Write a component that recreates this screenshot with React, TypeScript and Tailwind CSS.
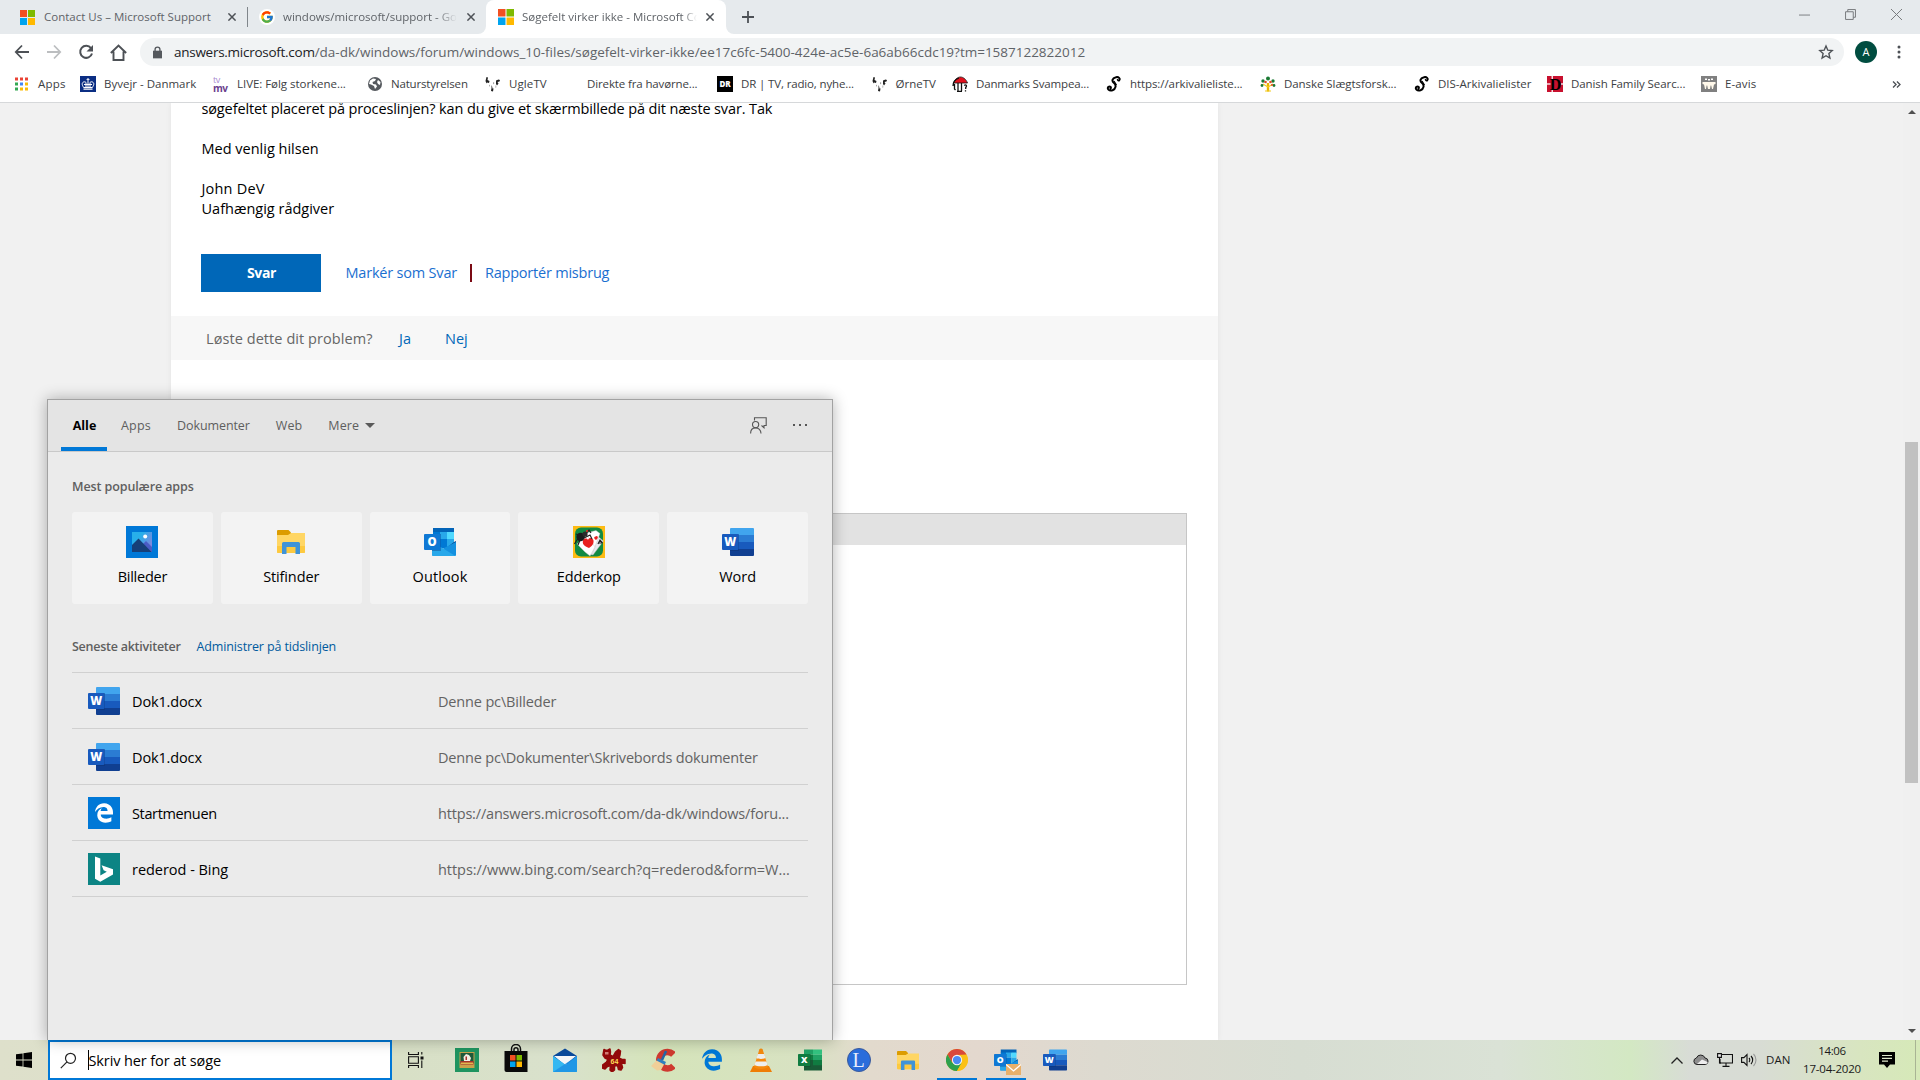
import React from 'react';
import { FcGoogle } from 'react-icons/fc';
import { FaEdgeLegacy } from 'react-icons/fa6';

interface IconProps {
  className?: string;
}

/* ---------- Shared icons ---------- */

const MicrosoftLogo: React.FC<IconProps> = ({ className }) => (
  <svg viewBox="0 0 16 16" className={className}>
    <path fill="#f25022" d="M0 0h7.5v7.5H0z" />
    <path fill="#7fba00" d="M8.5 0H16v7.5H8.5z" />
    <path fill="#00a4ef" d="M0 8.5h7.5V16H0z" />
    <path fill="#ffb900" d="M8.5 8.5H16V16H8.5z" />
  </svg>
);

const WordIcon: React.FC<IconProps> = ({ className }) => (
  <svg viewBox="0 0 32 28" className={className}>
    <path fill="#41a5ee" d="M9 0h22a1 1 0 0 1 1 1v6H8V1a1 1 0 0 1 1-1z" />
    <path fill="#2b7cd3" d="M8 7h24v7H8z" />
    <path fill="#185abd" d="M8 14h24v7H8z" />
    <path fill="#103f91" d="M8 21h24v6a1 1 0 0 1-1 1H9a1 1 0 0 1-1-1z" />
    <path fill="#0c2f6b" opacity=".4" d="M8 6h9v17H8z" />
    <rect y="6" width="16.4" height="16" rx="1" fill="#185abd" />
    <text x="8.2" y="18.2" textAnchor="middle" fontFamily="Open Sans, sans-serif" fontWeight="800" fontSize="11.5" fill="#fff">W</text>
  </svg>
);

const ExcelIcon: React.FC<IconProps> = ({ className }) => (
  <svg viewBox="0 0 32 28" className={className}>
    <path fill="#21a366" d="M8 0h12v7H8z" />
    <path fill="#33c481" d="M20 0h12v7H20z" />
    <path fill="#107c41" d="M8 7h12v7H8z" />
    <path fill="#21a366" d="M20 7h12v7H20z" />
    <path fill="#185c37" d="M8 14h24v14H8z" />
    <path fill="#107c41" d="M20 14h12v7H20z" />
    <path fill="#0b3d23" opacity=".35" d="M8 6h9v17H8z" />
    <rect y="6" width="16.4" height="16" rx="1" fill="#107c41" />
    <text x="8.2" y="18.2" textAnchor="middle" fontFamily="Open Sans, sans-serif" fontWeight="800" fontSize="12" fill="#fff">X</text>
  </svg>
);

const OutlookIcon: React.FC<IconProps> = ({ className }) => (
  <svg viewBox="0 0 32 28" className={className}>
    <path fill="#0364b8" d="M9 0h21v5H9z" />
    <path fill="#0078d4" d="M9 4h7v7H9z" />
    <path fill="#28a8ea" d="M16 4h7v7h-7z" />
    <path fill="#50d9ff" d="M23 4h7v7h-7z" />
    <path fill="#0364b8" d="M9 11h7v8H9z" />
    <path fill="#0078d4" d="M16 11h7v9h-7z" />
    <path fill="#28a8ea" d="M23 11h7v8h-7z" />
    <path fill="#0a4a92" d="M30 14l2-1v4l-12 6-12-6h3l9 4.5z" />
    <path fill="#1490df" d="M32 14v13a1 1 0 0 1-1 1H8l12-8z" />
    <path fill="#28a8ea" d="M8 14v13a1 1 0 0 0 1 1h22.5L20 21z" />
    <path fill="#0a2767" opacity=".35" d="M8 6h9v17H8z" />
    <rect y="6" width="16.4" height="16" rx="1" fill="#0f78d4" />
    <text x="8.2" y="18.2" textAnchor="middle" fontFamily="Open Sans, sans-serif" fontWeight="800" fontSize="11.5" fill="#fff">O</text>
  </svg>
);

const FolderIcon: React.FC<IconProps> = ({ className }) => (
  <svg viewBox="0 0 28 24" className={className}>
    <path fill="#dc9c00" d="M0 1a1 1 0 0 1 1-1h10.5L14 2.500V6H0z" />
    <path fill="#ffd664" d="M0 5h11l3-2h14v19a1 1 0 0 1-1 1H1a1 1 0 0 1-1-1z" />
    <path fill="#fdc93f" d="M0 16h28v6a1 1 0 0 1-1 1H1a1 1 0 0 1-1-1z" />
    <path fill="#3f93d8" d="M5 24V13.500a1.500 1.500 0 0 1 1.500-1.500h15a1.500 1.500 0 0 1 1.500 1.500V24h-4.500v-7h-9v7z" />
  </svg>
);

const PhotosIcon: React.FC<IconProps> = ({ className }) => (
  <svg viewBox="0 0 32 32" className={className}>
    <defs>
      <linearGradient id="photosSky" x1="0" x2="1" y1="0" y2=".6">
        <stop offset=".4" stopColor="#28afea" />
        <stop offset="1" stopColor="#7f86dd" />
      </linearGradient>
    </defs>
    <path fill="#0078d7" d="M0 0h32v32H0z" />
    <path fill="url(#photosSky)" d="M6 6h20v20H6z" />
    <path fill="#4a5cc4" d="M17 18l3-3 6 6v5h-4z" />
    <path fill="#163f78" d="M6 19l6.500-6.500L25.500 26H6z" />
    <circle cx="19.200" cy="10.500" r="2" fill="#fff" />
  </svg>
);

const SpiderIcon: React.FC<IconProps> = ({ className }) => (
  <svg viewBox="0 0 32 32" className={className}>
    <path fill="#fdbb13" d="M0 0h32v32H0z" />
    <rect x="2" y="1.500" width="28" height="29" rx="6" fill="#118a43" />
    <path fill="#e9e9ee" stroke="#aaa" strokeWidth=".4" d="M22 8l8.500 7-10.500 14-4-1z" />
    <path fill="#fff" stroke="#bbb" strokeWidth=".4" d="M13 7l10-2.500 4 3-8 21-5-3z" />
    <path fill="#fff" stroke="#bbb" strokeWidth=".4" d="M4 18l10-9 8 12-5 9-5-4z" />
    <path fill="#e8201f" d="M16 22c-5-2-7-4-6-7.500 1-2.500 4-2.500 5-.5 1-3 5-2.500 5.500.5.5 3.500-1.500 5.500-4.500 7.500zM23 14c-2-1-2.500-3-.5-3.500 1.500-1.500 3 .5 2 2z" />
    <path stroke="#222" strokeWidth="1.200" fill="none" d="M25 18l2-4 2.500 3M26 17h3M1.500 18l3-5 4 1M5 19l2-5M12 9l4-5 2 3M11 12l6-3 2 4M3 8l5 2" />
    <circle cx="7.500" cy="11" r="4.200" fill="#1b1b1b" />
    <circle cx="12" cy="8" r="2.600" fill="#2b2b2b" />
    <circle cx="14" cy="5" r="1" fill="#e8201f" />
  </svg>
);

const EdgeTile: React.FC<IconProps> = ({ className }) => (
  <span className={`${className} flex items-center justify-center bg-[#0078d7]`}>
    <FaEdgeLegacy className="h-5 w-5 text-white" />
  </span>
);

const BingTile: React.FC<IconProps> = ({ className }) => (
  <svg viewBox="0 0 32 32" className={className}>
    <path fill="#0c8484" d="M0 0h32v32H0z" />
    <path fill="#fff" d="M7 3.500l5.300 1.900v17l6.500-3.700-3.200-1.500-2-5 11.400 4v5.300l-12.700 7.200L7 25.800z" />
  </svg>
);

/* ---------- Bookmark icons ---------- */

const AppsGrid = () => (
  <svg viewBox="0 0 16 16" className="h-4 w-4">
    {['#ea4335', '#ea4335', '#ea4335', '#34a853', '#4285f4', '#fbbc05', '#34a853', '#fbbc05', '#fbbc05'].map((fill, i) => (
      <rect key={i} x={1 + (i % 3) * 5} y={1.5 + Math.floor(i / 3) * 5} width="3" height="3" fill={fill} />
    ))}
  </svg>
);

const DmiIcon = () => (
  <svg viewBox="0 0 16 16" className="h-4 w-4">
    <path fill="#0b2e83" d="M0 0h16v16H0z" />
    <path fill="#fff" d="M7.500 2h1v1.200h1v.9h-1V5h-1v-.9h-1v-.9h1zM3.500 12.500h9v1.300h-9z" />
    <path fill="none" stroke="#fff" d="M3.800 11.500C0 7 4 4.500 6 6.500v5M12.200 11.500C16 7 12 4.500 10 6.500v5M8 5v6.500M3.500 11.500h9M4 8.500h8" />
  </svg>
);

const TvmvIcon = () => (
  <span className="flex h-4 w-4 flex-col font-['Open_Sans',sans-serif] leading-[8px]">
    <span className="text-[9px] tracking-[-0.5px] text-[#a98bd0]">tv</span>
    <span className="text-[10px] font-bold tracking-[-0.6px] text-[#6b3f8d]">mv</span>
  </span>
);

const GlobeIcon = () => (
  <svg viewBox="0 0 16 16" className="h-4 w-4">
    <circle cx="8" cy="8" r="7" fill="#55595e" />
    <path fill="#fff" d="M3 4.500L6 2.500l3 .5-1 2-2.500 1L6 8l3 .5 1 2-2 2.500-1-3-3-1.500L2 8zM11 4l2.500 2-.5 3-2-1-1-2z" />
  </svg>
);

const OwlIcon = () => (
  <svg viewBox="0 0 16 16" className="h-4 w-4">
    <path fill="#222" d="M1.500 1l1.500.5L2.500 4l2 1-.5 2-2-.5-.5 1L.5 5zM11 4.500l2.500-1 1.500.5-.5 1.500-2 .5 1 1.500-1.500 2-1-1.500zM6.500 9l1 2.500-1 1zM6.500 12l2 .5-.5 3-2-.5z" />
    <path fill="#999" d="M8 6l1.500 1L8 8.500zM4 8.500l1 1-1 1.500zM10.500 9l1 2-1 1z" />
  </svg>
);

const DrIcon = () => (
  <span className="flex h-4 w-4 items-center justify-center bg-black font-['Open_Sans',sans-serif] text-[8px] font-extrabold leading-none text-white">
    DR
  </span>
);

const MushroomIcon = () => (
  <svg viewBox="0 0 16 16" className="h-4 w-4">
    <path fill="#e2101c" stroke="#111" strokeWidth=".8" d="M1.500 7C3 3 6 1 8.500 1S14 3 15.500 7z" />
    <path fill="none" stroke="#111" strokeWidth="1.300" d="M1 10c0-4 3-7 6-8M6 7v8M9.500 7v8M2.500 8v5l1 1M5 15.400h5M12.200 9.500c2-1.500 3 .5 1.500 2v1.500M13.500 14.300v1.200" />
  </svg>
);

const ScrollS = () => (
  <svg viewBox="0 0 16 16" className="h-4 w-4">
    <path fill="none" stroke="#000" strokeWidth="2" strokeLinecap="round" d="M13 4.500c1.800-2-.5-4-3-3.300C6 2 5.500 5 8 7s2 6-1.500 7.300C3 15.500.5 12.500 2.500 10.800c1.500-1 3 .5 2 1.700" />
    <path fill="none" stroke="#000" strokeWidth="1.200" d="M13 4.500c-1 .5-2-.5-1.500-1.500M8 5l2.500 4" />
  </svg>
);

const TreeIcon = () => (
  <svg viewBox="0 0 16 16" className="h-4 w-4">
    <path stroke="#e8b500" strokeWidth="2.400" d="M8 7v8.500" />
    <path stroke="#f4cc20" strokeWidth="1.200" fill="none" d="M3 8l5 3 5-3M5 15h6" />
    <g fill="#1b7a34">
      <circle cx="8" cy="2.500" r="2" /><circle cx="3" cy="5" r="1.700" /><circle cx="13" cy="5" r="1.700" />
      <circle cx="2" cy="9.500" r="1.400" /><circle cx="14" cy="9.500" r="1.400" />
    </g>
    <g fill="#e04a2b">
      <circle cx="5.500" cy="6" r="1.300" /><circle cx="10.500" cy="6" r="1.300" /><circle cx="12" cy="9" r="1" />
    </g>
  </svg>
);

const FamilyD = () => (
  <svg viewBox="0 0 16 16" className="h-4 w-4">
    <path fill="#c8102e" d="M0 0h16v16H0z" />
    <path fill="#fff" d="M4.500 0h1.500v3H4.500zM4.500 13h1.500v3H4.500zM0 7.300h3.500v1.400H0zM14 7.300h2v1.400h-2z" opacity=".85" />
    <text x="8.500" y="13.500" textAnchor="middle" fontFamily="Liberation Serif, serif" fontWeight="700" fontSize="16" fill="#000">D</text>
  </svg>
);

const EavisIcon = () => (
  <svg viewBox="0 0 16 16" className="h-4 w-4">
    <path fill="#808080" d="M0 0h16v16H0z" />
    <path fill="#fff8ea" d="M1.500 6h13v2l-1.500.5L12 13h-1l-.8-3.500h-.6L9 13H7L6.200 9.500h-.6L5 13H4L3 8.500 1.500 8z" />
    <path fill="#fff" d="M4 2.500h2V4H4zM7 3h2v1.500H7zM10 2.500h2V4h-2z" />
  </svg>
);

const bookmarks = [
  { label: 'Apps', Icon: AppsGrid, cls: 'w-[66px] tracking-[0.2px]' },
  { label: 'Byvejr - Danmark', Icon: DmiIcon, cls: 'w-[133px]' },
  { label: 'LIVE: Følg storkene...', Icon: TvmvIcon, cls: 'w-[154px] tracking-[-0.04px]' },
  { label: 'Naturstyrelsen', Icon: GlobeIcon, cls: 'w-[118px] tracking-[-0.18px]' },
  { label: 'UgleTV', Icon: OwlIcon, cls: 'w-[78px] tracking-[0.1px]' },
  { label: 'Direkte fra havørne...', Icon: null, cls: 'w-[154px] tracking-[-0.13px]' },
  { label: 'DR | TV, radio, nyhe...', Icon: DrIcon, cls: 'w-[154.5px] tracking-[-0.14px]' },
  { label: 'ØrneTV', Icon: OwlIcon, cls: 'w-[80.5px]' },
  { label: 'Danmarks Svampea...', Icon: MushroomIcon, cls: 'w-[154px] tracking-[-0.16px]' },
  { label: 'https://arkivalieliste...', Icon: ScrollS, cls: 'w-[154px] tracking-[-0.08px]' },
  { label: 'Danske Slægtsforsk...', Icon: TreeIcon, cls: 'w-[154px] tracking-[-0.06px]' },
  { label: 'DIS-Arkivalielister', Icon: ScrollS, cls: 'w-[133px]' },
  { label: 'Danish Family Searc...', Icon: FamilyD, cls: 'w-[154px] tracking-[-0.08px]' },
  { label: 'E-avis', Icon: EavisIcon, cls: 'w-[80px] tracking-[0.1px]' },
];

/* ---------- Browser chrome ---------- */

const TabClose = () => (
  <svg viewBox="0 0 8 8" className="h-2 w-2 shrink-0" stroke="#4d5156" strokeWidth="1.500">
    <path d="M.4.4l7.200 7.200M7.600.4L.4 7.600" />
  </svg>
);

const TabStrip = () => (
  <div className="flex h-[34px] items-center bg-[#e6eaed] text-[11.5px] text-[#5f6368]">
    <div className="flex w-[247px] items-center pl-5">
      <MicrosoftLogo className="mr-[9px] h-[15px] w-[15px]" />
      <span className="w-[184px]">Contact Us – Microsoft Support</span>
      <TabClose />
    </div>
    <div className="h-5 w-px bg-[#80868b]" />
    <div className="flex w-[238px] items-center pl-[11px]">
      <span className="mr-2 flex h-4 w-4 items-center justify-center rounded-full bg-white">
        <FcGoogle className="h-[14px] w-[14px]" />
      </span>
      <span className="mr-2.5 w-[174px] overflow-hidden whitespace-nowrap [mask-image:linear-gradient(to_right,#000_88%,transparent)]">
        windows/microsoft/support - Goo
      </span>
      <TabClose />
    </div>
    <div className="relative flex h-full w-[240px] items-center rounded-t-lg bg-white pl-3">
      <span className="absolute bottom-0 -left-2 h-2 w-2 bg-white">
        <span className="block h-full w-full rounded-br-lg bg-[#e6eaed]" />
      </span>
      <span className="absolute bottom-0 -right-2 h-2 w-2 bg-white">
        <span className="block h-full w-full rounded-bl-lg bg-[#e6eaed]" />
      </span>
      <MicrosoftLogo className="mr-2 h-4 w-4" />
      <span className="mr-[9px] w-[175px] overflow-hidden whitespace-nowrap [mask-image:linear-gradient(to_right,#000_92%,transparent)]">
        Søgefelt virker ikke - Microsoft Co
      </span>
      <TabClose />
    </div>
    <svg viewBox="0 0 12 12" className="ml-4 h-3 w-3" stroke="#4d5156" strokeWidth="1.800">
      <path d="M6 0v12M0 6h12" />
    </svg>
    <div className="ml-auto flex items-center gap-[35px] pr-[18px] pb-1.5">
      <svg viewBox="0 0 10 10" className="h-[11px] w-[11px]" stroke="#888b8e"><path d="M0 5.500h10" /></svg>
      <svg viewBox="0 0 10 10" className="h-[11px] w-[11px]" stroke="#777a7d" strokeWidth=".9" fill="none">
        <path d="M.5 2.500h7v7h-7zM2.500 2.500v-2h7v7h-2" />
      </svg>
      <svg viewBox="0 0 10 10" className="h-[11px] w-[11px]" stroke="#777a7d" strokeWidth=".9"><path d="M0 0l10 10M10 0L0 10" /></svg>
    </div>
  </div>
);

const AddressBar = () => (
  <div className="flex h-9 items-center bg-white">
    <div className="flex w-[140px] items-center gap-4 pl-3.5">
      <svg viewBox="0 0 16 16" className="h-4 w-4" fill="none" stroke="#4d5156" strokeWidth="1.800"><path d="M15 8H2M8 1.500L1.800 8 8 14.500" /></svg>
      <svg viewBox="0 0 16 16" className="h-4 w-4" fill="none" stroke="#bcbec0" strokeWidth="1.800"><path d="M1 8h13M8 1.500L14.200 8 8 14.500" /></svg>
      <svg viewBox="0 0 16 16" className="h-4 w-4">
        <path d="M13 4.200A6 6 0 1 0 14 9.500" fill="none" stroke="#4d5156" strokeWidth="2" />
        <path fill="#4d5156" d="M15 1v6.500H8.500z" />
      </svg>
      <svg viewBox="0 0 16 16" className="h-[17px] w-[17px]" fill="none" stroke="#4d5156" strokeWidth="1.800"><path d="M.8 8.500L8 1.500l7.200 7M3.300 7v8h9.400V7" /></svg>
    </div>
    <div className="flex h-7 w-[1704px] items-center rounded-full bg-[#f1f3f4] pr-2.5 pl-[13px] text-[13.5px] text-[#5f6368]">
      <svg viewBox="0 0 10 13" className="mr-3 h-[13px] w-[9px]">
        <path fill="#55595e" d="M0 4.500h10V13H0z" />
        <path fill="none" stroke="#55595e" strokeWidth="1.500" d="M2.300 5V3.200a2.700 2.700 0 0 1 5.400 0V5" />
      </svg>
      <span className="tracking-[-0.27px] text-[#202124]">answers.microsoft.com</span>
      <span className="tracking-[-0.01px]">/da-dk/windows/forum/windows_10-files/søgefelt-virker-ikke/ee17c6fc-5400-424e-ac5e-6a6ab66cdc19?tm=1587122822012</span>
      <svg viewBox="0 0 16 16" className="ml-auto h-4 w-4" fill="none" stroke="#4d5156" strokeWidth="1.400">
        <path d="M8 2l1.800 4.200 4.400.4-3.300 3 1 4.400L8 11.700 4.100 14l1-4.400-3.300-3 4.400-.4z" />
      </svg>
    </div>
    <div className="ml-[11px] flex h-[22px] w-[22px] items-center justify-center rounded-full bg-[#004d40] text-[11px] text-white">A</div>
    <svg viewBox="0 0 4 16" className="ml-5 h-4 w-1" fill="#4d5156">
      <circle cx="2" cy="3" r="1.500" /><circle cx="2" cy="8" r="1.500" /><circle cx="2" cy="13" r="1.500" />
    </svg>
  </div>
);

const BookmarksBar = () => (
  <div className="flex h-[33px] items-center border-b border-[#d6d8da] bg-white pb-1 pl-3.5 text-[11.5px] text-[#3c4043]">
    {bookmarks.map(({ label, Icon, cls }) => (
      <div key={label} className={`flex shrink-0 items-center gap-2 whitespace-nowrap ${cls}`}>
        {Icon ? <Icon /> : <span className="w-4" />}
        <span>{label}</span>
      </div>
    ))}
    <svg viewBox="0 0 10 8" className="mr-[19px] ml-auto h-[7px] w-[9px]" fill="none" stroke="#4d5156" strokeWidth="1.500">
      <path d="M1 .5L4.500 4 1 7.500M5.500.5L9 4 5.500 7.500" />
    </svg>
  </div>
);

/* ---------- Forum page ---------- */

const ForumPage = () => (
  <div className="flex min-h-0 flex-1 overflow-hidden bg-[#f1f1f1]">
    <main className="ml-[171px] w-[1047px] bg-white shadow-[0_0_6px_rgba(0,0,0,0.06)]">
      <div className="-mt-1 pl-[30.5px] text-[14.5px] leading-5 text-black">
        <p className="tracking-[-0.13px]">søgefeltet placeret på proceslinjen? kan du give et skærmbillede på dit næste svar. Tak</p>
        <p className="mt-5">Med venlig hilsen</p>
        <p className="mt-5 tracking-[0.2px]">John DeV</p>
        <p>Uafhængig rådgiver</p>
      </div>
      <div className="mt-[35px] flex items-center pl-[30px] text-[14.5px] text-[#1a6fd0]">
        <button className="h-[38px] w-[120px] bg-[#0067b8] pb-px pl-px text-[14px] font-bold tracking-[-0.4px] text-white">Svar</button>
        <a className="ml-[24.5px] tracking-[-0.2px]">Markér som Svar</a>
        <span className="mr-[13px] ml-[13px] h-[18px] w-[2px] bg-[#7b0a14]" />
        <a className="tracking-[-0.22px]">Rapportér misbrug</a>
      </div>
      <div className="mt-6 flex h-11 items-center bg-[#f7f7f7] pt-px pl-[35px] text-[14.5px] font-medium text-[#0067b8]">
        <span className="w-[193px] tracking-[0.07px] text-[#666]">Løste dette dit problem?</span>
        <a className="w-[46px]">Ja</a>
        <a>Nej</a>
      </div>
      <div className="mt-[153px] mr-[31px] ml-[30px] h-[472px] border border-[#c6c6c6]">
        <div className="h-[31px] bg-[#e2e2e2]" />
      </div>
    </main>
    <div className="ml-auto flex w-[17px] flex-col items-center bg-[#f0f0f0] py-[7px]">
      <svg viewBox="0 0 8 4" className="h-1 w-2" fill="#505050"><path d="M4 0l4 4H0z" /></svg>
      <div className="mt-[328px] h-[341px] w-[13px] bg-[#c1c1c1]" />
      <svg viewBox="0 0 8 4" className="mt-auto h-1 w-2" fill="#505050"><path d="M0 0h8L4 4z" /></svg>
    </div>
  </div>
);

/* ---------- Search flyout ---------- */

const popularApps = [
  { label: 'Billeder', icon: <PhotosIcon className="h-8 w-8" />, cls: 'tracking-[-0.25px]' },
  { label: 'Stifinder', icon: <FolderIcon className="h-6 w-7" />, cls: 'tracking-[-0.13px]' },
  { label: 'Outlook', icon: <OutlookIcon className="h-7 w-8" />, cls: 'tracking-[0.1px]' },
  { label: 'Edderkop', icon: <SpiderIcon className="h-8 w-8" />, cls: 'tracking-[-0.14px]' },
  { label: 'Word', icon: <WordIcon className="h-7 w-8" />, cls: '' },
];

const activities = [
  { name: 'Dok1.docx', path: 'Denne pc\\Billeder', icon: <WordIcon className="h-7 w-8" />, nameCls: 'tracking-[-0.14px]', pathCls: 'tracking-[-0.16px]' },
  { name: 'Dok1.docx', path: 'Denne pc\\Dokumenter\\Skrivebords dokumenter', icon: <WordIcon className="h-7 w-8" />, nameCls: 'tracking-[-0.14px]', pathCls: 'tracking-[-0.19px]' },
  { name: 'Startmenuen', path: 'https://answers.microsoft.com/da-dk/windows/foru...', icon: <EdgeTile className="h-8 w-8" />, nameCls: 'tracking-[-0.36px]', pathCls: 'tracking-[-0.18px]' },
  { name: 'rederod - Bing', path: 'https://www.bing.com/search?q=rederod&form=W...', icon: <BingTile className="h-8 w-8" />, nameCls: 'tracking-[-0.03px]', pathCls: 'tracking-[-0.05px]' },
];

const SearchFlyout = () => (
  <section className="absolute top-[399px] left-[47px] flex h-[641px] w-[786px] flex-col border border-b-0 border-[#a2a2a2] bg-[#ebebeb] shadow-[0_0_14px_rgba(0,0,0,0.3)]">
    <header className="flex h-[52px] items-center border-b border-[#c9c9c9] bg-[#e4e4e4] pl-[13px] text-[12.5px] text-[#5e5e5e]">
      <div className="relative mr-[14px] flex h-full w-[46px] items-center justify-center pt-0.5 pl-px font-bold text-black">
        Alle
        <span className="absolute inset-x-0 bottom-0 h-1 bg-[#0078d7]" />
      </div>
      <span className="mr-[26px] pt-0.5 tracking-[0.2px]">Apps</span>
      <span className="mr-[26px] pt-0.5 tracking-[-0.08px]">Dokumenter</span>
      <span className="mr-[26px] pt-0.5 tracking-[0.1px]">Web</span>
      <span className="pt-0.5 tracking-[0.1px]">Mere</span>
      <svg viewBox="0 0 10 5" className="ml-1.5 h-[5px] w-[10px]" fill="#5a5a5a"><path d="M0 0h10L5 5z" /></svg>
      <svg viewBox="0 0 17 17" className="mr-[26px] mb-px ml-auto h-[17px] w-[17px]" fill="none" stroke="#555" strokeWidth="1.100">
        <path d="M4.500 3.500V.8h11.700v7.700h-2.200v2.200l-2.500-2.200" />
        <circle cx="5.600" cy="7.600" r="3.100" />
        <path d="M.6 16.500c0-3.500 2-5.600 5-5.600s5.400 2.100 5.400 5.600" />
      </svg>
      <div className="mr-[25px] mb-0.5 flex gap-1">
        <span className="h-0.5 w-0.5 bg-[#555]" /><span className="h-0.5 w-0.5 bg-[#555]" /><span className="h-0.5 w-0.5 bg-[#555]" />
      </div>
    </header>

    <div className="px-6 pt-[25px]">
      <h2 className="text-[12.5px] leading-5 font-semibold tracking-[-0.1px] text-[#5f5f5f]">Mest populære apps</h2>
      <div className="mt-[15px] grid grid-cols-5 gap-2">
        {popularApps.map(({ label, icon, cls }) => (
          <div key={label} className="flex h-[92px] flex-col items-center rounded-[3px] bg-[#f3f3f3] pt-3.5">
            <div className="flex h-8 items-center">{icon}</div>
            <span className={`mt-[9px] text-[14.5px] leading-5 text-black ${cls}`}>{label}</span>
          </div>
        ))}
      </div>

      <div className="mt-[33px] mb-[15px] flex text-[12.5px] leading-5">
        <h2 className="w-[124.5px] font-semibold tracking-[-0.25px] text-[#5f5f5f]">Seneste aktiviteter</h2>
        <a className="tracking-[-0.13px] text-[#005a9e]">Administrer på tidslinjen</a>
      </div>
      <div className="border-b border-[#d0d0d0]">
        {activities.map((item, i) => (
          <div key={i} className="flex h-14 items-center border-t border-[#d0d0d0] pt-px pl-4 text-[14.5px]">
            {item.icon}
            <span className={`ml-3 w-[306px] pt-0.5 text-black ${item.nameCls}`}>{item.name}</span>
            <span className={`pt-0.5 whitespace-nowrap text-[#636363] ${item.pathCls}`}>{item.path}</span>
          </div>
        ))}
      </div>
    </div>
  </section>
);

/* ---------- Taskbar icons ---------- */

const SolitaireIcon = () => (
  <svg viewBox="0 0 24 24" className="h-6 w-6">
    <path fill="#1f9460" d="M0 0h24v24H0z" />
    <path fill="#c9a24b" d="M4.500 4h15v16h-15z" />
    <path fill="#1e5a3a" d="M5.500 5h13v10h-13z" />
    <path fill="#f3efe4" d="M8.500 9L11 6l3 1 2 3-1 3H9z" />
    <path fill="#a8322a" d="M5.500 13h13v3.500h-13zM10.500 8.500H12V12h-1.500z" />
    <path fill="#e0b84f" d="M6 14.500h12V16H6z" />
  </svg>
);

const StoreIcon = () => (
  <svg viewBox="0 0 24 28" className="mb-1 h-7 w-6">
    <path fill="none" stroke="#111" strokeWidth="1.500" d="M7.500 8V5a4.500 4.500 0 0 1 9 0v3M10 7V5.500c0-2.500 4-2.500 4 0V7" />
    <path fill="#0a0a0a" d="M.5 7h23v21H2.500a2 2 0 0 1-2-2z" />
    <path fill="#f25022" d="M6 11h5.500v5.500H6z" /><path fill="#7fba00" d="M12.500 11H18v5.500h-5.500z" />
    <path fill="#00a4ef" d="M6 17.500h5.500V23H6z" /><path fill="#ffb900" d="M12.500 17.500H18V23h-5.500z" />
  </svg>
);

const MailIcon = () => (
  <svg viewBox="0 0 24 24" className="h-6 w-6">
    <path fill="#0a4a9c" d="M0 8l12-7.500L24 8v8H0z" />
    <path fill="#f4f6f8" d="M1 8h22L12 17z" />
    <path fill="#35b8f1" d="M0 8l13 9 11-9v16H0z" />
    <path fill="#1c8fe3" d="M0 24L24 8v15a1 1 0 0 1-1 1z" opacity=".8" />
  </svg>
);

const IrfanViewIcon = () => (
  <svg viewBox="0 0 24 24" className="h-6 w-6">
    <path
      fill="#930a0a"
      stroke="#930a0a"
      strokeWidth="1.500"
      strokeLinejoin="round"
      d="M2 1.500l2 1 2-.5L8 1l.5 3L8 7l3 1.500L13.500 4l3-2.500 2 1.500-.5 4-1 3 3 1.500h3v4l-1.500-.5-2 .5 1 4-1.500 2.500-2.500-.5-1-4-3 .5 0 4-2.500 2-2-2 .5-4.500-3 1-2.500 2.500-3-1 .5-3 4-3 1.500-2.500-3-1.500L1 7z"
    />
    <path fill="#e39a90" d="M3 4h3.500v2.500H3z" opacity=".8" />
    <text x="12.500" y="16" textAnchor="middle" fontFamily="Liberation Sans, sans-serif" fontWeight="700" fontSize="7" fill="#ffdc5a">64</text>
  </svg>
);

const CCleanerIcon = () => (
  <svg viewBox="0 0 24 24" className="h-6 w-6">
    <path fill="none" stroke="#cf3a30" strokeWidth="6.500" d="M22.500 6.500A8.300 8.300 0 1 0 22.500 18" />
    <path stroke="#2468a8" strokeWidth="2.500" d="M15 3l-4 9" />
    <path fill="#2f7fc0" d="M7 10l8 4-1.500 3-8-4z" />
    <path fill="#f0cf98" d="M5.500 12.500l7.500 4-3 5.500-4 .5L0 18z" />
  </svg>
);

const VlcIcon = () => (
  <svg viewBox="0 0 22 24" className="h-6 w-[22px]">
    <path fill="#ef7d05" d="M3 18h16l3 6H0z" />
    <path fill="#f58a0e" d="M9.300 1.500c.6-1.200 2.800-1.200 3.400 0L18 19c-2 2.500-12 2.500-14 0z" />
    <path fill="#eee" d="M7.700 6h6.600l1.200 4c-1.500 1.200-7.500 1.200-9 0zM5.500 13.500h11l1 3.500c-2 1.800-11 1.800-13 0z" />
  </svg>
);

const LIcon = () => (
  <span className="flex h-6 w-6 items-center justify-center rounded-full border border-[#3b5a9a] bg-[#2a6ddb] font-['Liberation_Serif',serif] text-[20px] leading-none text-[#e8eefc]">
    L
  </span>
);

const ChromeIcon = () => (
  <svg viewBox="0 0 24 24" className="h-[22px] w-[22px]">
    <circle cx="12" cy="12" r="12" fill="#fbc116" />
    <path fill="#d9483b" d="M1.600 6A12 12 0 0 1 22.400 6L12 6.500 6.800 15z" />
    <path fill="#2da04e" d="M1.600 6A12 12 0 0 0 12 24l5.200-9H6.800z" />
    <path fill="#fbc116" d="M12 24A12 12 0 0 0 22.400 6.500H12l5.200 8.500z" />
    <circle cx="12" cy="12" r="5.600" fill="#f5f5f5" />
    <circle cx="12" cy="12" r="4.500" fill="#4a8af4" />
  </svg>
);

const OutlookMailIcon = () => (
  <span className="relative">
    <OutlookIcon className="h-[22px] w-6" />
    <svg viewBox="0 0 15 11" className="absolute -right-[3px] -bottom-1 h-[11px] w-[15px]">
      <path fill="#e8b06a" d="M0 0h15v11H0z" />
      <path fill="none" stroke="#fff" strokeWidth="1.300" d="M0 .5L7.500 7 15 .5" />
    </svg>
  </span>
);

const taskbarApps = [
  { icon: <SolitaireIcon />, active: false },
  { icon: <StoreIcon />, active: false },
  { icon: <MailIcon />, active: false },
  { icon: <IrfanViewIcon />, active: false },
  { icon: <CCleanerIcon />, active: false },
  { icon: <FaEdgeLegacy className="h-[22px] w-[22px] text-[#0078d7]" />, active: false },
  { icon: <VlcIcon />, active: false },
  { icon: <ExcelIcon className="h-[22px] w-6" />, active: false },
  { icon: <LIcon />, active: false },
  { icon: <FolderIcon className="h-[19px] w-[22px]" />, active: false },
  { icon: <ChromeIcon />, active: true },
  { icon: <OutlookMailIcon />, active: true },
  { icon: <WordIcon className="h-[22px] w-6" />, active: false },
];

const Taskbar = () => (
  <footer className="flex h-10 items-center bg-[linear-gradient(to_right,#dee0cb_0,#d8e0c6_400px,#d9e1cc_560px,#d5e4ba_660px,#d8e2c2_800px,#e2dacd_870px,#e3d8ce_980px,#dddad0_1100px,#d7ddd2_1300px,#dae2d6_1500px,#d3e8c3_1630px,#d8dcd6_1690px,#d8dcd4_1760px,#d8e5c0_1860px,#d6e9b8_1920px)]">
    <div className="flex w-12 justify-center">
      <svg viewBox="0 0 16 16" className="h-4 w-4" fill="#000">
        <path d="M0 2.300l6.600-.9v6.200H0zM7.400 1.300L16 0v7.600H7.400zM0 8.400h6.600v6.200L0 13.700zM7.400 8.400H16V16l-8.600-1.200z" />
      </svg>
    </div>
    <div className="flex h-full w-[344px] items-center border-2 border-[#0078d7] bg-white pl-2.5 text-[14.5px] text-black">
      <svg viewBox="0 0 17 17" className="mr-3 h-[17px] w-[17px]" fill="none" stroke="#222" strokeWidth="1.200">
        <circle cx="10.500" cy="6.300" r="5" />
        <path d="M7 9.900L.8 16.200" />
      </svg>
      <span className="-ml-px h-5 w-px bg-black" />
      <span className="-ml-[0.5px] pt-px tracking-[-0.11px]">Skriv her for at søge</span>
    </div>
    <svg viewBox="0 0 16 16" className="mx-4 h-4 w-4" fill="none" stroke="#111" strokeWidth="1.100">
      <path d="M.6 0v2.500h9.800V0M.6 16v-2.500h9.800V16M.6 4.800h9.800v6.400H.6zM13.800 0v2.500M13.800 8.500V16" />
      <path fill="#111" stroke="none" d="M12.500 4.500h3v3h-3z" />
    </svg>
    <div className="ml-0.5 flex h-full">
      {taskbarApps.map(({ icon, active }, i) => (
        <div key={i} className="flex w-[49px] flex-col items-center">
          <div className="flex h-[38px] items-center pt-0.5">{icon}</div>
          {active && <span className="h-0.5 w-10 bg-[#0078d7]" />}
        </div>
      ))}
    </div>

    <div className="ml-auto flex h-full items-center text-[11.5px] text-[#1a1a1a]">
      <svg viewBox="0 0 12 7" className="mr-2.5 h-[7px] w-3" fill="none" stroke="#222" strokeWidth="1.300"><path d="M.5 6.500L6 1l5.500 5.500" /></svg>
      <svg viewBox="0 0 16 11" className="mr-2 mb-0.5 h-[11px] w-4">
        <path fill="#8d8d8d" stroke="#222" d="M4 10.500a3.300 3.300 0 0 1-.6-6.500A4.600 4.600 0 0 1 12 4a3.300 3.300 0 0 1 .5 6.500z" />
        <path fill="#eee" d="M4 10L9 5.500l5.500 2.500c.5 1-.5 2-2 2z" />
      </svg>
      <svg viewBox="0 0 16 14" className="mr-2 h-3.5 w-4" fill="none" stroke="#111" strokeWidth="1.100">
        <path d="M5 1.500h10.500v8.500H3V6M9 10v3M5.500 13.400h7" />
        <path d="M.6.600h3.800v3.800H.6z" fill="#eee" />
        <path d="M2.500 4.500V10H4" />
      </svg>
      <svg viewBox="0 0 16 14" className="mr-[9px] h-3.5 w-4" fill="none" stroke="#111" strokeWidth="1.100">
        <path d="M.6 4.600h2.300L6 1.500v11L2.900 9.400H.6zM8 5c1 1 1 3 0 4M10 3c2.200 2.200 2.200 5.800 0 8" />
        <path stroke="#999" d="M12.500 1c3.300 3.300 3.300 8.700 0 12" />
      </svg>
      <span className="w-[37px] tracking-[0.1px]">DAN</span>
      <div className="w-[58px] pb-px text-center leading-[18px]">
        <div className="tracking-[-0.36px]">14:06</div>
        <div className="tracking-[-0.22px]">17-04-2020</div>
      </div>
      <svg viewBox="0 0 16 16" className="ml-[18px] h-4 w-4">
        <path fill="#000" d="M0 0h16v12.500h-5L8 16l-3-3.500H0z" />
        <path stroke="#dfe8cc" strokeWidth="1.200" d="M3 3.500h10M3 6.300h10M3 9.100h6" />
      </svg>
      <span className="mr-1 ml-5 h-full w-px bg-[#a9b494]" />
    </div>
  </footer>
);

export default function App() {
  return (
    <div className="relative flex h-[1080px] w-[1920px] flex-col overflow-hidden font-['Open_Sans','Noto_Sans',sans-serif]">
      <TabStrip />
      <AddressBar />
      <BookmarksBar />
      <ForumPage />
      <SearchFlyout />
      <Taskbar />
    </div>
  );
}
